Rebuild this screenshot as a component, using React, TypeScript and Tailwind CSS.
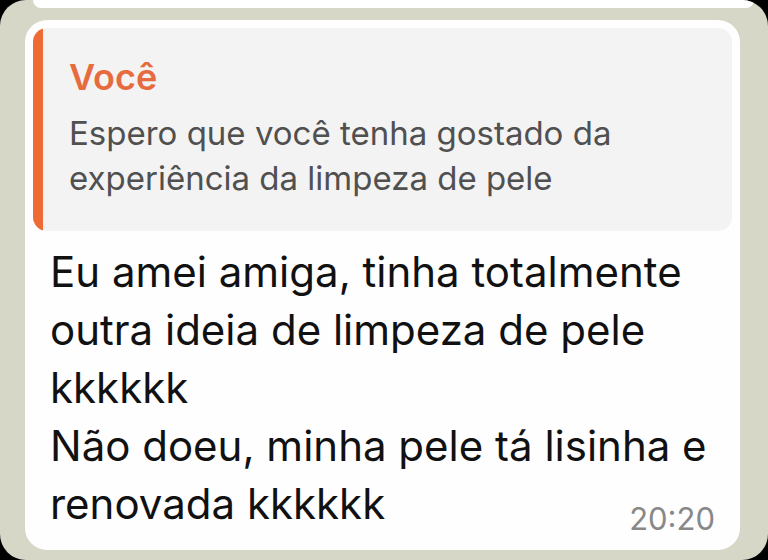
export default function App() {
  const lines = [
    "Eu amei amiga, tinha totalmente",
    "outra ideia de limpeza de pele",
    "kkkkkk",
    "Não doeu, minha pele tá lisinha e",
  ];

  return (
    <div className="h-[560px] w-[768px] overflow-hidden bg-black font-['Inter',sans-serif]">
      <div className="h-full w-full overflow-hidden rounded-[26px] bg-[#d7d7c8]">
        {/* bottom of previous bubble */}
        <div className="ml-[33px] mr-[14px] h-[8px] rounded-b-[18px] bg-white" />

        <div className="ml-[25px] mt-[12px] flex h-[530px] w-[715px] flex-col rounded-[22px] bg-[#fefefe] p-[8px]">
          {/* quoted reply */}
          <div className="flex h-[203px] overflow-hidden rounded-[14px] bg-[#f3f3f3]">
            <div className="w-[10px] shrink-0 bg-[#ee6b36]" />
            <div className="pl-[26px] pt-[27px]">
              <div className="text-[36px] font-semibold leading-[45px] text-[#e66c40]">
                Você
              </div>
              <div className="mt-[11px] text-[33px] leading-[45px] text-[#505050]">
                <div className="whitespace-nowrap">Espero que você tenha gostado da</div>
                <div className="whitespace-nowrap">experiência da limpeza de pele</div>
              </div>
            </div>
          </div>

          {/* message body */}
          <div className="mt-[12px] pl-[17px] pr-[17px] text-[42px] leading-[58px] text-[#111111]">
            {lines.map((l) => (
              <div key={l} className="whitespace-nowrap">
                {l}
              </div>
            ))}
            <div className="flex items-end justify-between">
              <div className="whitespace-nowrap">renovada kkkkkk</div>
              <span className="mb-[-2px] text-[31px] leading-[32px] text-[#888888]">
                20:20
              </span>
            </div>
          </div>
        </div>
      </div>
    </div>
  );
}
